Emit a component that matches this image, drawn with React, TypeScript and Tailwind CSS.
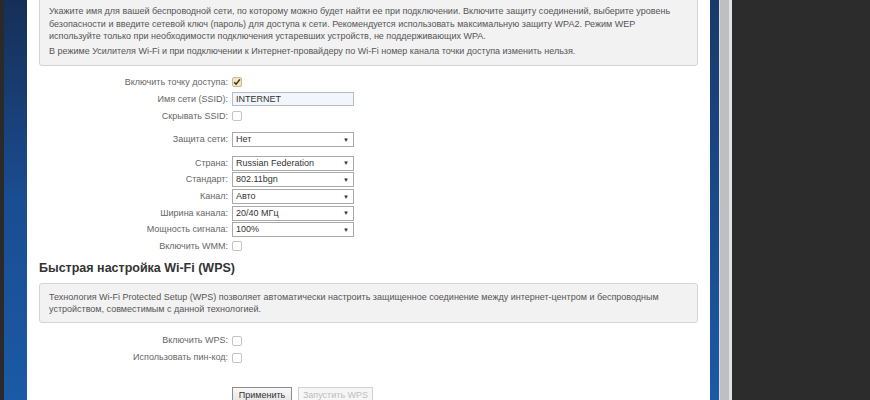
import React from "react";

const font = { fontFamily: '"Liberation Sans", Arial, sans-serif' };

function Check({ checked }: { checked?: boolean }) {
  return (
    <span
      className={
        "inline-flex h-[10px] w-[10px] items-center justify-center rounded-[2px] border " +
        (checked ? "border-[#c9b98c] bg-[#f3e6c4]" : "border-[#c4c4c4] bg-white")
      }
    >
      {checked && (
        <svg width="8" height="8" viewBox="0 0 8 8">
          <path d="M1.2 4.2 L3.1 6.2 L6.9 1.4" fill="none" stroke="#3a2e10" strokeWidth="1.5" />
        </svg>
      )}
    </span>
  );
}

function Select({ value }: { value: string }) {
  return (
    <div className="flex h-[15px] w-[122px] items-center justify-between border border-[#a9a9a9] bg-white pl-[3px] pr-[4px] text-[9px] leading-none text-[#333]">
      <span>{value}</span>
      <span className="text-[6px] text-[#333]">▼</span>
    </div>
  );
}

function Row({ label, children, h = "h-[16.6px]" }: { label: string; children: React.ReactNode; h?: string }) {
  return (
    <div className={"flex items-center " + h}>
      <div className="w-[202px] pr-[1px] text-right text-[9px] leading-none text-[#666]">{label}</div>
      <div className="ml-[3px] flex items-center">{children}</div>
    </div>
  );
}

export default function App() {
  return (
    <div className="flex h-[400px] w-[870px] overflow-hidden bg-[#2b2b2b]" style={font}>
      <div className="w-[4px] bg-[#2a2a2a]" />
      <div className="w-[23px] bg-gradient-to-b from-[#152f57] via-[#1a4d92] to-[#1b5aa6]" />
      <div className="flex w-[683px] flex-col bg-white">
        <div className="px-[12px]">
          <div className="-mt-[5px] rounded-[3px] border border-[#d4d4d4] bg-[#f2f2f2] px-[9px] pb-[7px] pt-[9px] text-[9px] leading-[12.5px] text-[#555]">
            <p>
              Укажите имя для вашей беспроводной сети, по которому можно будет найти ее при подключении. Включите защиту соединений, выберите уровень безопасности и введите сетевой ключ (пароль) для доступа к сети. Рекомендуется использовать максимальную защиту WPA2. Режим WEP используйте только при необходимости подключения устаревших устройств, не поддерживающих WPA.
            </p>
            <p className="mt-[2.5px]">
              В режиме Усилителя Wi-Fi и при подключении к Интернет-провайдеру по Wi-Fi номер канала точки доступа изменить нельзя.
            </p>
          </div>
        </div>

        <div className="mt-[8px]">
          <Row label="Включить точку доступа:" h="h-[17px]">
            <Check checked />
          </Row>
          <Row label="Имя сети (SSID):" h="h-[17px]">
            <div className="flex h-[14px] w-[122px] items-center border border-[#b5bcc4] bg-[#f0f6fb] pl-[3px] text-[9px] leading-none text-[#333]">
              INTERNET
            </div>
          </Row>
          <Row label="Скрывать SSID:" h="h-[17px]">
            <Check />
          </Row>
          <div className="h-[7px]" />
          <Row label="Защита сети:">
            <Select value="Нет" />
          </Row>
          <div className="h-[7px]" />
          <Row label="Страна:">
            <Select value="Russian Federation" />
          </Row>
          <Row label="Стандарт:">
            <Select value="802.11bgn" />
          </Row>
          <Row label="Канал:">
            <Select value="Авто" />
          </Row>
          <Row label="Ширина канала:">
            <Select value="20/40 МГц" />
          </Row>
          <Row label="Мощность сигнала:">
            <Select value="100%" />
          </Row>
          <Row label="Включить WMM:">
            <Check />
          </Row>
        </div>

        <div className="px-[12px]">
          <h2 className="mt-[6px] text-[12.5px] font-bold leading-[15px] text-[#333]">Быстрая настройка Wi-Fi (WPS)</h2>
          <div className="mt-[7px] rounded-[3px] border border-[#d4d4d4] bg-[#f2f2f2] px-[9px] pb-[6px] pt-[7px] text-[9px] leading-[12.5px] text-[#555]">
            Технология Wi-Fi Protected Setup (WPS) позволяет автоматически настроить защищенное соединение между интернет-центром и беспроводным устройством, совместимым с данной технологией.
          </div>
        </div>

        <div className="mt-[10px]">
          <Row label="Включить WPS:">
            <Check />
          </Row>
          <Row label="Использовать пин-код:">
            <Check />
          </Row>
        </div>

        <div className="mt-[21px] flex gap-[6px] pl-[205px]">
          <button className="h-[18px] w-[60px] border border-[#8c8c8c] bg-gradient-to-b from-[#f8f8f8] to-[#e2e2e2] text-[9px] leading-none text-[#333]">
            Применить
          </button>
          <button className="h-[18px] w-[75px] border border-[#d0d0d0] bg-[#f6f6f6] text-[9px] leading-none text-[#bdbdbd]">
            Запустить WPS
          </button>
        </div>
      </div>
      <div className="w-[9px] bg-gradient-to-b from-[#183a6a] to-[#1b5aa6]" />
      <div className="w-[1px] bg-[#d6dde6]" />
      <div className="w-[9px] bg-[#bfbfbf]" />
      <div className="w-[3px] bg-[#dfe4ea]" />
      <div className="flex-1 bg-[#2c2c2c]" />
    </div>
  );
}
